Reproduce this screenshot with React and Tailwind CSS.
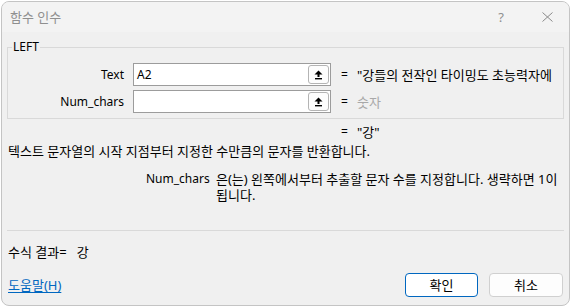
import React from "react";

const UpArrow = () => (
  <svg width="9" height="10" viewBox="0 0 9 10">
    <polygon points="4.5,0.5 8.5,4.5 0.5,4.5" fill="#000" />
    <rect x="3.5" y="4" width="2" height="3" fill="#000" />
    <rect x="1" y="8" width="7" height="1.4" fill="#000" />
  </svg>
);

const ArgRow = ({ label, value, result, muted }) => {
  return (
    <div className="flex items-center h-[23px]">
      <div className="w-[116px] text-right text-black">{label}</div>
      <div className="ml-[9px] w-[198px] h-[23px] border border-[#9c9c9c] bg-white flex items-center">
        <div className="flex-1 pl-[3px] text-black">{value}</div>
        <div className="w-[21px] h-[19px] mr-[1px] rounded-[3px] border border-[#b4b4b4] bg-[#fdfdfd] flex items-center justify-center">
          <UpArrow />
        </div>
      </div>
      <span className="ml-[10px] w-[16px] text-black">=</span>
      <span
        className={
          "w-[198px] overflow-hidden whitespace-nowrap text-[13px] " +
          (muted ? "text-[#a8a8a8]" : "text-black")
        }
      >
        {result}
      </span>
    </div>
  );
};

export default function App() {
  return (
    <div className="w-[571px] h-[307px] bg-white overflow-hidden pl-[1px] pt-[1px] text-[12px] leading-[16px] font-['Noto_Sans','Noto_Sans_CJK_KR',sans-serif]">
      <div className="w-[569px] h-[305px] border border-[#c4c4c4] rounded-[8px] overflow-hidden flex flex-col bg-[#f0f0f0]">
        {/* title bar */}
        <div className="h-[30px] shrink-0 bg-[#f3f3f3] flex items-center pl-[8px] text-[#8f8f8f]">
          <span className="text-[13px]">함수 인수</span>
          <span className="ml-auto mr-[38px] text-[13px]">?</span>
          <svg width="11" height="10" viewBox="0 0 11 10" className="mr-[16px]">
            <line x1="0.5" y1="0.5" x2="10.5" y2="9.5" stroke="#8a8a8a" strokeWidth="1" />
            <line x1="10.5" y1="0.5" x2="0.5" y2="9.5" stroke="#8a8a8a" strokeWidth="1" />
          </svg>
        </div>

        <div className="flex-1 px-[5px] flex flex-col">
          {/* argument group */}
          <fieldset className="mt-[7px] w-[557px] border border-[#d9d9d9] pb-[5px]">
            <legend className="ml-[4px] px-[1px] text-black">LEFT</legend>
            <div className="mt-[8px] flex flex-col gap-[4px]">
              <ArgRow label="Text" value="A2" result={'"강들의 전작인 타이밍도 초능력자에'} />
              <ArgRow label="Num_chars" value="" result="숫자" muted />
            </div>
          </fieldset>

          <div className="mt-[5px] flex text-black">
            <span className="ml-[334px] w-[16px]">=</span>
            <span className="text-[13px]">"강"</span>
          </div>

          <p className="mt-[3px] pl-[1px] text-black text-[13px]">
            텍스트 문자열의 시작 지점부터 지정한 수만큼의 문자를 반환합니다.
          </p>

          <div className="mt-[12px] flex text-black">
            <span className="ml-[139px] w-[70px]">Num_chars</span>
            <p className="whitespace-nowrap text-[13px]">
              은(는) 왼쪽에서부터 추출할 문자 수를 지정합니다. 생략하면 1이
              <br />
              됩니다.
            </p>
          </div>

          <div className="mt-[27px] h-px bg-[#d9d9d9]"></div>

          <div className="mt-[13px] pl-[1px] flex text-black text-[13px]">
            <span>수식 결과=</span>
            <span className="ml-[10px]">강</span>
          </div>

          <div className="mt-[13px] flex items-center text-[13px]">
            <a className="pl-[1px] text-[#0067c0] underline underline-offset-2">도움말(H)</a>
            <button className="ml-auto w-[73px] h-[24px] rounded-[4px] border border-[#0067c0] bg-white text-black">
              확인
            </button>
            <button className="ml-[11px] mr-[1px] w-[74px] h-[24px] rounded-[4px] border border-[#d0d0d0] bg-[#fdfdfd] text-black">
              취소
            </button>
          </div>
        </div>
      </div>
    </div>
  );
}
